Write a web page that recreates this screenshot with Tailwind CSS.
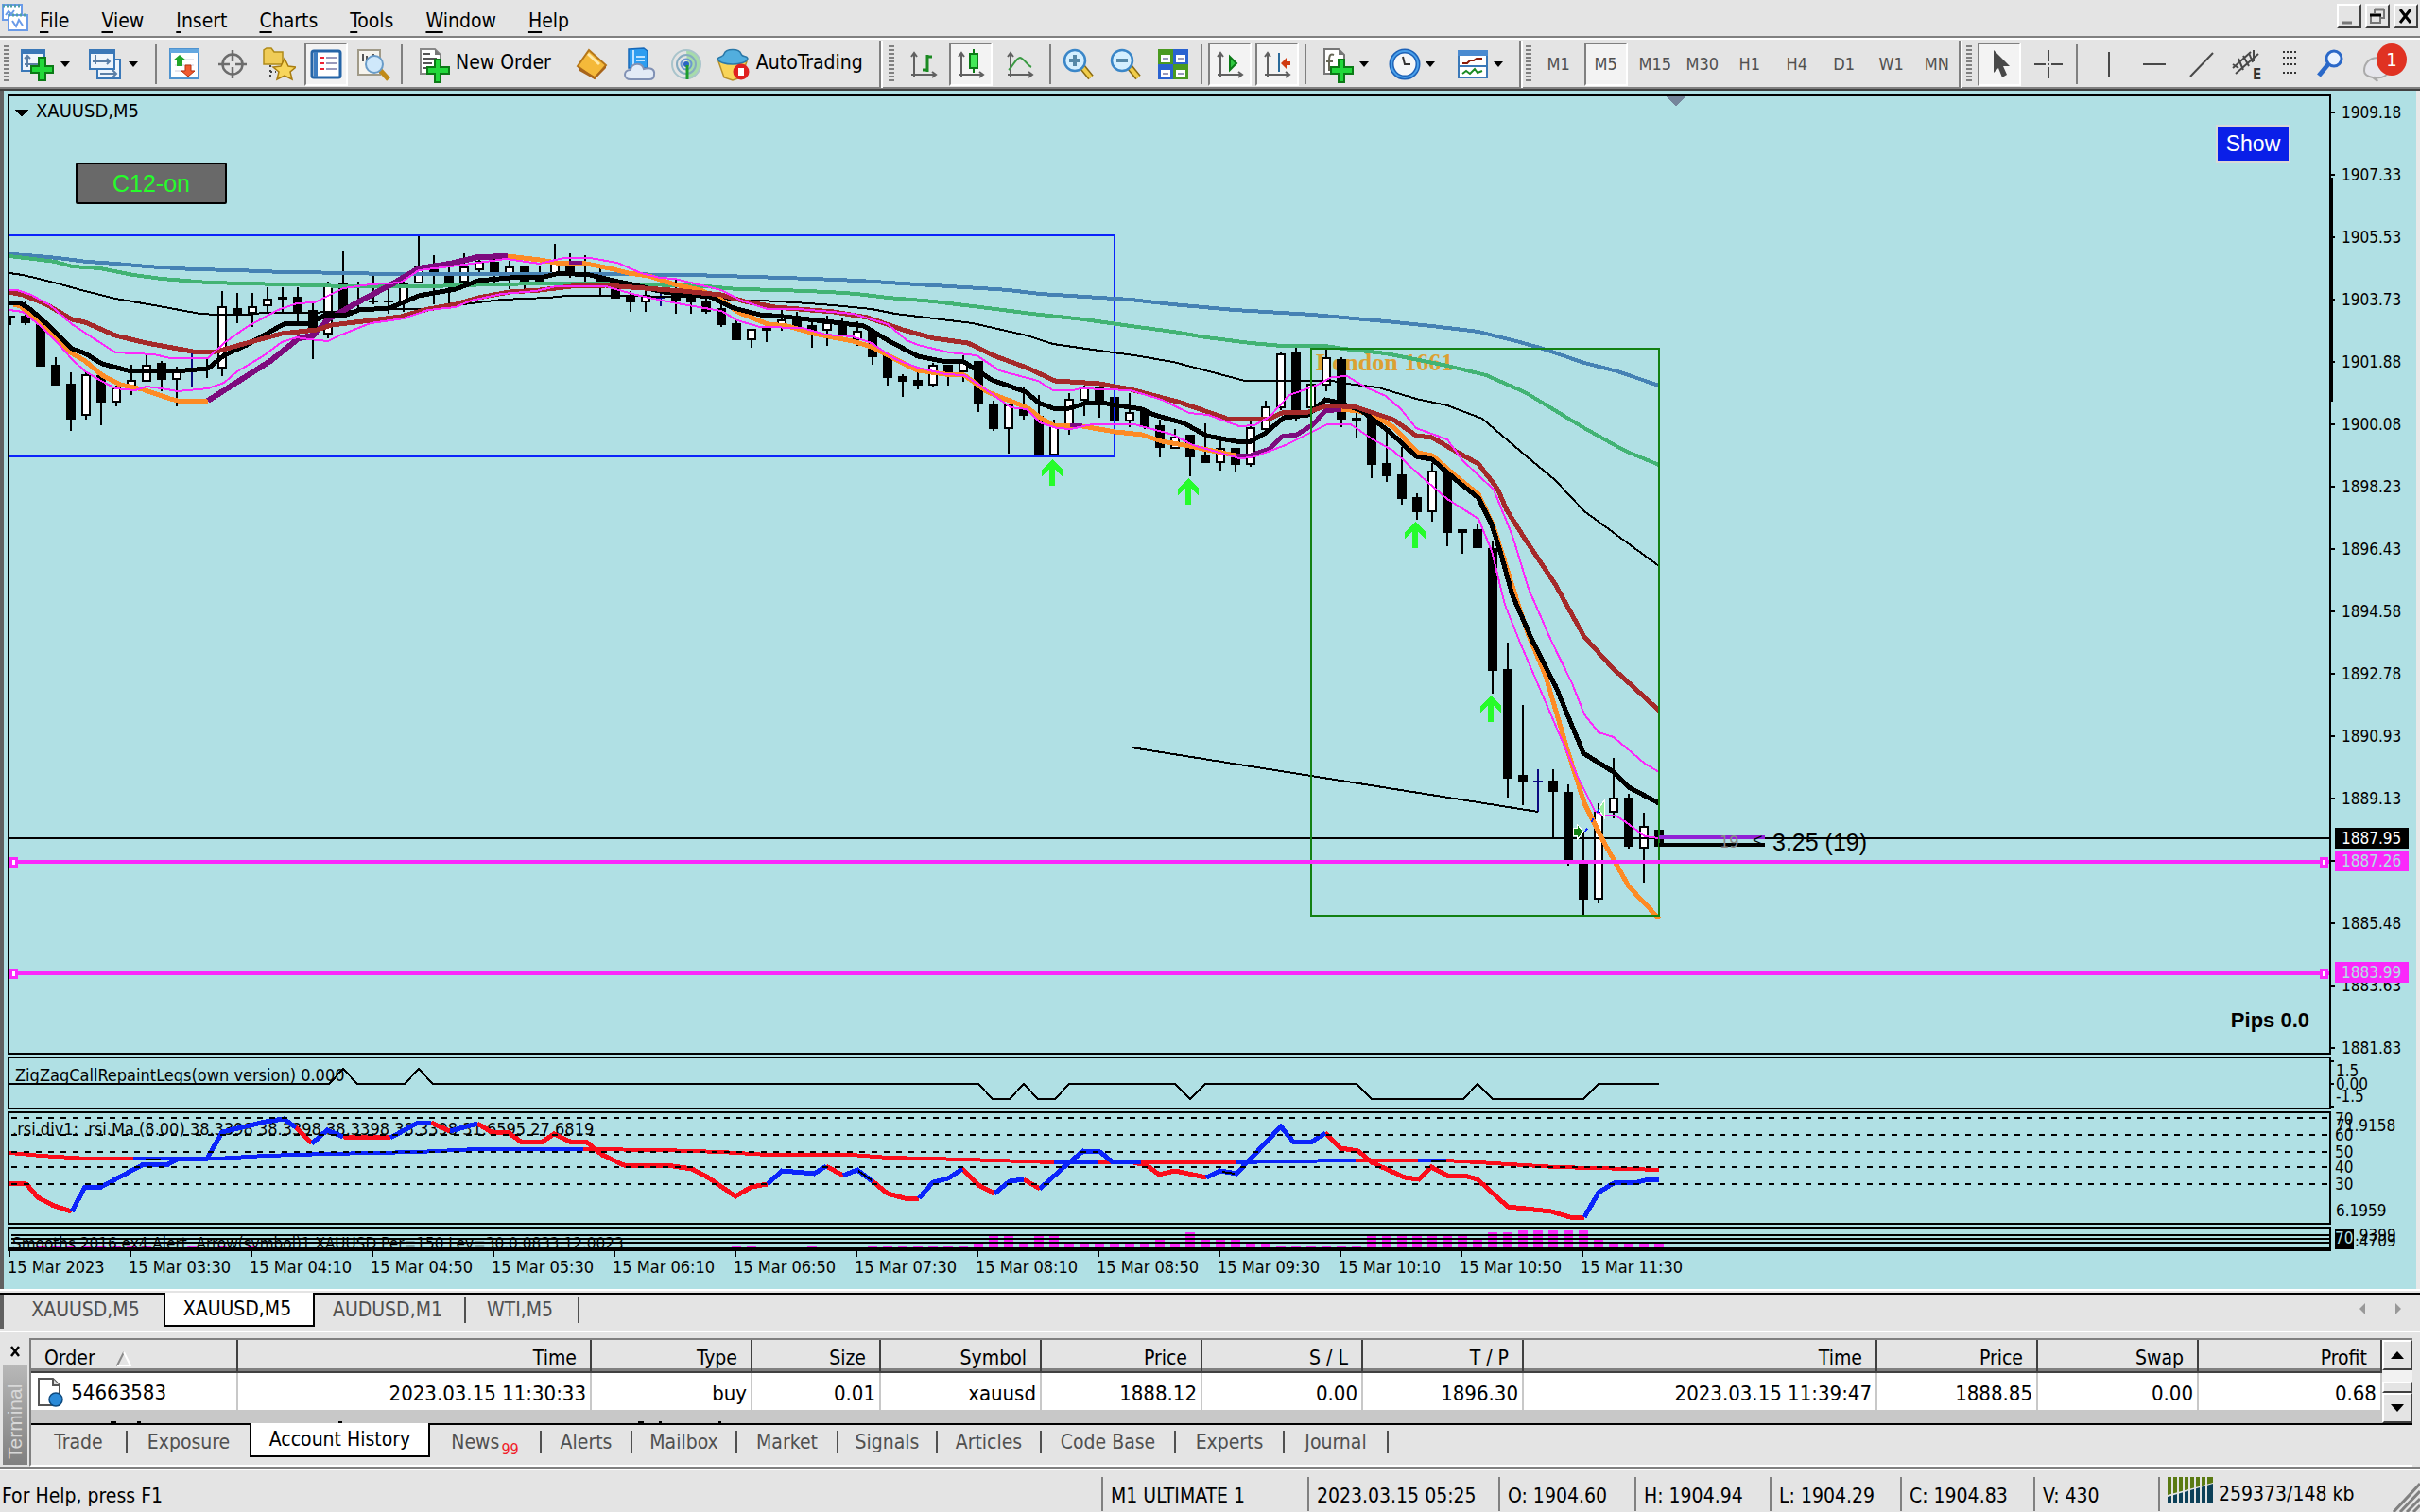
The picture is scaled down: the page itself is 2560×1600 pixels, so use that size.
<!DOCTYPE html>
<html lang="en">
<head>
  <meta charset="UTF-8" />
  <meta name="viewport" content="width=device-width, initial-scale=1.0"/>
  <title>XAUUSD,M5</title>
  <script src="https://cdn.jsdelivr.net/npm/@tailwindcss/browser@4"></script>
</head>
<body class="min-h-screen flex flex-col bg-[#e4e4e4] text-black font-['DejaVu_Sans_Condensed','DejaVu_Sans',sans-serif] text-[21px] leading-6 overflow-hidden whitespace-nowrap">

  <!-- menu -->
  <header class="h-[38px] flex items-start">
    <svg class="w-8 h-8 mt-1 shrink-0" viewBox="0 0 32 32" fill="#fff" stroke="#6a9be8" stroke-width="2">
      <rect x="3" y="1" width="20" height="16"/><path d="M3 2h20" stroke="#4fa0a8" stroke-width="3" stroke-dasharray="2 2"/><path d="M6 12l3-4 3 3 3-4" fill="none"/>
      <rect x="9" y="12" width="20" height="16"/><path d="M9 12h20" stroke="#4fa0a8" stroke-width="3" stroke-dasharray="2 2"/><path d="M13 18l4 6 3-7 4 6" fill="none"/>
    </svg>
    <nav class="flex gap-[34px] pl-2.5 pt-[10px]">
      <button><u class="underline-offset-4">F</u>ile</button>
      <button><u class="underline-offset-4">V</u>iew</button>
      <button><u class="underline-offset-4">I</u>nsert</button>
      <button><u class="underline-offset-4">C</u>harts</button>
      <button><u class="underline-offset-4">T</u>ools</button>
      <button><u class="underline-offset-4">W</u>indow</button>
      <button><u class="underline-offset-4">H</u>elp</button>
    </nav>
    <div class="ml-auto flex gap-1 pt-1 pr-0.5">
      <button aria-label="Minimize" class="w-[26px] h-[26px] bg-[#e4e4e4] border-2 border-t-white border-l-white border-r-[#404040] border-b-[#404040]"><svg class="w-full h-full" viewBox="0 0 22 22"><path d="M4 18h10" stroke="#777" stroke-width="3"/></svg></button>
      <button aria-label="Restore" class="w-[26px] h-[26px] bg-[#e4e4e4] border-2 border-t-white border-l-white border-r-[#404040] border-b-[#404040]"><svg class="w-full h-full" viewBox="0 0 22 22" fill="none" stroke="#777" stroke-width="2"><path d="M8 8V4h10v9h-4"/><path d="M8 4h10" stroke-width="3"/><rect x="4" y="10" width="10" height="8"/><path d="M3 10h12" stroke="#000" stroke-width="3"/></svg></button>
      <button aria-label="Close" class="w-[26px] h-[26px] bg-[#e4e4e4] border-2 border-t-white border-l-white border-r-[#404040] border-b-[#404040]"><svg class="w-full h-full" viewBox="0 0 22 22"><path d="M5 4l11 14M16 4L5 18" stroke="#000" stroke-width="3"/></svg></button>
    </div>
  </header>

  <!-- toolbar -->
  <div class="h-[58px] flex items-center bg-[#e4e4e4] border-t-2 border-t-[#808080] shadow-[inset_0_2px_0_#fff,inset_0_-2px_0_#404040,inset_0_-4px_0_#808080] *:shrink-0">
    <svg class="w-4 h-10" viewBox="0 0 16 40"><path d="M7 0v40" stroke="#808080" stroke-width="6" stroke-dasharray="2 2"/></svg>
    <button aria-label="New chart" class="w-[72px] h-[46px] flex items-center gap-1.5 pl-1.5">
      <svg class="w-9 h-9" viewBox="0 0 36 36"><rect x="1" y="3" width="24" height="22" fill="#eef5fc" stroke="#3a78b8" stroke-width="2"/><path d="M1 5h24" stroke="#3a78b8" stroke-width="4"/><path d="M7 9v12M4 12l3-3 3 3M4 18h14" stroke="#5b7fa6" stroke-width="2" fill="none"/><path d="M19 11h7v9h8v7h-8v8h-7v-8h-8v-7h8z" fill="#22d83a" stroke="#0b7a16" stroke-width="2"/></svg>
      <svg class="w-2.5 h-1.5" viewBox="0 0 10 6"><path d="M0 0h10L5 6z"/></svg>
    </button>
    <button aria-label="Profiles" class="w-[72px] h-[46px] flex items-center gap-1.5 pl-1.5">
      <svg class="w-9 h-9" viewBox="0 0 36 36"><rect x="9" y="13" width="24" height="20" fill="#eef5fc" stroke="#3a78b8" stroke-width="2"/><path d="M12 28h16M25 24l4 4-4 4" stroke="#5b7fa6" stroke-width="2" fill="none"/><rect x="1" y="3" width="26" height="20" fill="#eef5fc" stroke="#3a78b8" stroke-width="2"/><path d="M1 5h26" stroke="#3a78b8" stroke-width="4"/><path d="M7 8v10M4 15h18M19 12l3 3-3 3" stroke="#5b7fa6" stroke-width="2" fill="none"/></svg>
      <svg class="w-2.5 h-1.5" viewBox="0 0 10 6"><path d="M0 0h10L5 6z"/></svg>
    </button>
    <i class="w-0.5 h-[42px] bg-[#808080] mx-1"></i>
    <button aria-label="Market Watch" class="w-[46px] h-[46px] mx-0.5 grid place-items-center">
      <svg class="w-9 h-9" viewBox="0 0 36 36"><rect x="3" y="2" width="30" height="31" fill="#fff" stroke="#4f93cf" stroke-width="2"/><path d="M3 4h30" stroke="#64a8e0" stroke-width="4"/><path d="M8 13h20M8 19h20M8 25h20" stroke="#ccd" stroke-width="1"/><path d="M13 8l7 6-4 0v6h-6v-6H6z" fill="#22a52a"/><path d="M22 31l-7-6h4v-6h6v6h4z" fill="#f05a30" stroke="#b8320c"/></svg>
    </button>
    <button aria-label="Data Window" class="w-[46px] h-[46px] mx-0.5 grid place-items-center">
      <svg class="w-9 h-9" viewBox="0 0 36 36" fill="none" stroke="#6c6c6c" stroke-width="2.500"><circle cx="19" cy="18" r="10.500"/><path d="M19 3v12M19 21v12M4 18h12M22 18h12"/></svg>
    </button>
    <button aria-label="Navigator" class="w-[46px] h-[46px] mx-0.5 grid place-items-center">
      <svg class="w-9 h-9" viewBox="0 0 36 36"><path d="M2 10V3l3-2h5l3 4h9v13H2z" fill="#f0cc58" stroke="#b08a18" stroke-width="1.500"/><path d="M9 19v14M9 26h6" stroke="#444" stroke-width="2" stroke-dasharray="2 3"/><path d="M24 12l4 8 8 1-6 5 2 8-8-4-8 4 2-8-6-5 8-1z" fill="#f8d65c" stroke="#a87c10" stroke-width="1.500"/></svg>
    </button>
    <button aria-label="Terminal" class="w-[46px] h-[46px] mx-0.5 grid place-items-center bg-[#f3f3f3] border-2 border-t-[#808080] border-l-[#808080] border-r-white border-b-white">
      <svg class="w-9 h-9" viewBox="0 0 36 36"><rect x="3" y="4" width="30" height="28" rx="2" fill="#fff" stroke="#2565a8" stroke-width="3"/><path d="M5 5h4v26H5z" fill="#3c7cc0"/><path d="M12 11h4M12 17h4M12 23h4" stroke="#e23" stroke-width="2"/><path d="M18 11h12M18 17h12M18 23h12" stroke="#99b" stroke-width="2"/></svg>
    </button>
    <button aria-label="Strategy Tester" class="w-[46px] h-[46px] mx-0.5 grid place-items-center">
      <svg class="w-9 h-9" viewBox="0 0 36 36"><rect x="2" y="3" width="23" height="26" fill="#f6f4ee" stroke="#a09a88" stroke-width="2"/><path d="M7 7v8M11 9v6M18 7v9" stroke="#555" stroke-width="2"/><path d="M25 24l9 10" stroke="#c08a18" stroke-width="5"/><circle cx="19" cy="18" r="9" fill="#cfe8fb" stroke="#6a9cc8" stroke-width="2"/></svg>
    </button>
    <i class="w-0.5 h-[42px] bg-[#808080] mx-1"></i>
    <button class="h-[46px] flex items-center gap-1 pl-3 pr-[18px]">
      <svg class="w-9 h-10" viewBox="0 0 36 40"><path d="M3 4h15l6 6v20H3z" fill="#fff" stroke="#888" stroke-width="2"/><path d="M18 4v6h6z" fill="#777"/><path d="M6 9h7M6 14h14M6 19h9M6 24h8" stroke="#555" stroke-width="2"/><path d="M18 15h6v8h9v7h-9v9h-6v-9h-8v-7h8z" fill="#22d83a" stroke="#0b7a16" stroke-width="2"/></svg>
      <span class="-mt-1">New Order</span>
    </button>
    <button aria-label="Indicators" class="w-[46px] h-[46px] mx-0.5 grid place-items-center">
      <svg class="w-9 h-9" viewBox="0 0 36 36"><path d="M15 3l18 16-12 14L3 20z" fill="#f4b93a" stroke="#b5761a" stroke-width="2"/><path d="M3 20l2 5 16 9 12-12v-3L21 31z" fill="#a8641a"/><path d="M14 7l12 11" stroke="#ffe9a8" stroke-width="3"/></svg>
    </button>
    <button aria-label="MetaEditor" class="w-[46px] h-[46px] mx-0.5 grid place-items-center">
      <svg class="w-9 h-9" viewBox="0 0 36 36"><path d="M7 2l16-1 4 3v18H7z" fill="#2e9df0" stroke="#1768b8" stroke-width="1.500"/><path d="M12 3v17M15 10h9M15 14h9" stroke="#bfe3ff" stroke-width="2"/><path d="M9 34c-8 0-8-10 0-10 1-8 12-8 14-1 7-2 12 0 11 6 0 3-2 5-5 5z" fill="#e3ebf6" stroke="#8191b4" stroke-width="2"/></svg>
    </button>
    <button aria-label="Signals" class="w-[46px] h-[46px] mx-0.5 grid place-items-center">
      <svg class="w-9 h-9" viewBox="0 0 36 36" fill="none"><path d="M19 18l-1 16c10 0 15-8 15-16S26 3 18 3" fill="#a6dcaa"/><circle cx="18" cy="18" r="15" stroke="#a9c4cb" stroke-width="2"/><circle cx="18" cy="18" r="10" stroke="#86acc0" stroke-width="2"/><circle cx="18" cy="18" r="5.500" stroke="#6c98d0" stroke-width="2"/><circle cx="18" cy="18" r="3" fill="#2a65c4"/><path d="M19 19v15" stroke="#1d9c2c" stroke-width="3"/></svg>
    </button>
    <button class="h-[46px] flex items-center gap-[7px] pl-1.5 pr-[17px]">
      <svg class="w-9 h-9" viewBox="0 0 36 36"><path d="M3 15l6 17 9 3 9-3 6-17z" fill="#f8d458" stroke="#b8902a" stroke-width="1.500"/><path d="M2 12c3-3 6-1 7-5 2-6 16-6 18 0 1 4 6 1 7 5-2 8-30 8-32 0z" fill="#52aede" stroke="#2a78a8" stroke-width="1.500"/><circle cx="27" cy="26" r="8.500" fill="#e02020"/><rect x="24" y="22" width="6" height="8" fill="#fff"/></svg>
      <span class="-mt-1">AutoTrading</span>
    </button>
    <i class="w-1 h-[50px] bg-[#808080] border-r-2 border-white"></i>
    <svg class="w-[18px] h-10" viewBox="0 0 18 40"><path d="M9 0v40" stroke="#808080" stroke-width="6" stroke-dasharray="2 2"/></svg>
    <button aria-label="Bar Chart" class="w-[46px] h-[46px] mx-0.5 grid place-items-center">
      <svg class="w-9 h-9" viewBox="0 0 36 36" fill="none" stroke="#606060" stroke-width="2"><path d="M8 6v26M5 29h26M5 10l3-4 3 4M27 26l4 3-4 3"/><path d="M22 8v18M22 10h5M17 24h5" stroke="#1b8a22" stroke-width="3"/></svg>
    </button>
    <button aria-label="Candlesticks" class="w-[46px] h-[46px] mx-0.5 grid place-items-center bg-[#f3f3f3] border-2 border-t-[#808080] border-l-[#808080] border-r-white border-b-white">
      <svg class="w-9 h-9" viewBox="0 0 36 36" fill="none" stroke="#606060" stroke-width="2"><path d="M8 6v26M5 29h26M5 10l3-4 3 4M27 26l4 3-4 3"/><path d="M21 2v25" stroke="#0b7a16" stroke-width="2"/><rect x="17" y="7" width="8" height="15" fill="#44e858" stroke="#0b7a16"/></svg>
    </button>
    <button aria-label="Line Chart" class="w-[46px] h-[46px] mx-1 grid place-items-center">
      <svg class="w-9 h-9" viewBox="0 0 36 36" fill="none" stroke="#606060" stroke-width="2"><path d="M8 6v26M5 29h26M5 10l3-4 3 4M27 26l4 3-4 3"/><path d="M6 24c5-4 7-12 12-13 5 1 7 8 12 10" stroke="#3a9a42"/></svg>
    </button>
    <i class="w-0.5 h-[42px] bg-[#808080] mx-1"></i>
    <button aria-label="Zoom In" class="w-[46px] h-[46px] mx-0.5 grid place-items-center">
      <svg class="w-9 h-9" viewBox="0 0 36 36"><path d="M22 21l9 11" stroke="#8a6a10" stroke-width="7"/><path d="M22 21l9 11" stroke="#f0cc4a" stroke-width="4"/><circle cx="14" cy="14" r="11" fill="#d4efff" stroke="#3a86c8" stroke-width="2.500"/><path d="M14 8v12M8 14h12" stroke="#5588a8" stroke-width="4"/></svg>
    </button>
    <button aria-label="Zoom Out" class="w-[46px] h-[46px] mx-0.5 grid place-items-center">
      <svg class="w-9 h-9" viewBox="0 0 36 36"><path d="M22 21l9 11" stroke="#8a6a10" stroke-width="7"/><path d="M22 21l9 11" stroke="#f0cc4a" stroke-width="4"/><circle cx="14" cy="14" r="11" fill="#d4efff" stroke="#3a86c8" stroke-width="2.500"/><path d="M8 14h12" stroke="#5588a8" stroke-width="4"/></svg>
    </button>
    <button aria-label="Tile Windows" class="w-[46px] h-[46px] mx-0.5 grid place-items-center">
      <svg class="w-9 h-9" viewBox="0 0 36 36"><path d="M2 2h16v16H2zM18 18h16v16H18z" fill="#4a9a20"/><path d="M18 2h16v16H18zM2 18h16v16H2z" fill="#2a62d0"/><path d="M5 8h10v8H5zM21 8h10v8H21zM5 24h10v8H5zM21 24h10v8H21z" fill="#fff"/><path d="M7 12h6M23 12h6M7 28h6M23 28h6" stroke="#99b" stroke-width="2"/></svg>
    </button>
    <i class="w-0.5 h-[42px] bg-[#808080] mx-1"></i>
    <button aria-label="Auto Scroll" class="w-[46px] h-[46px] mx-0.5 grid place-items-center bg-[#f3f3f3] border-2 border-t-[#808080] border-l-[#808080] border-r-white border-b-white">
      <svg class="w-9 h-9" viewBox="0 0 36 36" fill="none" stroke="#606060" stroke-width="2"><path d="M8 6v26M5 29h26M5 10l3-4 3 4M27 26l4 3-4 3"/><path d="M18 10l7 7-7 7z" fill="#2fc840" stroke="#0b7a16"/></svg>
    </button>
    <button aria-label="Chart Shift" class="w-[46px] h-[46px] mx-0.5 grid place-items-center bg-[#f3f3f3] border-2 border-t-[#808080] border-l-[#808080] border-r-white border-b-white">
      <svg class="w-9 h-9" viewBox="0 0 36 36" fill="none" stroke="#606060" stroke-width="2"><path d="M8 6v26M5 29h26M5 10l3-4 3 4M27 26l4 3-4 3"/><path d="M20 6v20" stroke="#2a6a9a"/><path d="M22 17l6-6v4h4v4h-4v4z" fill="#d03a10" stroke="none"/></svg>
    </button>
    <i class="w-0.5 h-[42px] bg-[#808080] ml-1 mr-[10px]"></i>
    <button aria-label="Indicators list" class="w-[70px] h-[46px] flex items-center gap-1 pl-1.5">
      <svg class="w-9 h-10" viewBox="0 0 36 40"><path d="M3 4h15l6 6v20H3z" fill="#fff" stroke="#777" stroke-width="2"/><path d="M18 4v6h6z" fill="#777"/><path d="M13 10c-5-2-5 3-5 7v10M5 17h7" fill="none" stroke="#665" stroke-width="2"/><path d="M18 15h6v8h9v7h-9v9h-6v-9h-8v-7h8z" fill="#22d83a" stroke="#0b7a16" stroke-width="2"/></svg>
      <svg class="w-2.5 h-1.5" viewBox="0 0 10 6"><path d="M0 0h10L5 6z"/></svg>
    </button>
    <button aria-label="Periods" class="w-[72px] h-[46px] flex items-center gap-1 pl-1.5">
      <svg class="w-9 h-9" viewBox="0 0 36 36"><circle cx="18" cy="18" r="14" fill="#f4f6f8" stroke="#1d62b8" stroke-width="5"/><circle cx="18" cy="18" r="14" fill="none" stroke="#4aa0ea" stroke-width="2"/><path d="M16 10l2 8h6" fill="none" stroke="#333" stroke-width="2"/></svg>
      <svg class="w-2.5 h-1.5" viewBox="0 0 10 6"><path d="M0 0h10L5 6z"/></svg>
    </button>
    <button aria-label="Templates" class="w-[73px] h-[46px] flex items-center gap-1 pl-1.5">
      <svg class="w-9 h-9" viewBox="0 0 36 36"><rect x="3" y="4" width="30" height="28" fill="#fff" stroke="#3a78b8" stroke-width="2"/><path d="M2 6h32" stroke="#4a8ad0" stroke-width="6"/><path d="M3 20h30" stroke="#3a78b8" stroke-width="2"/><path d="M7 17h5l3-3h4l3-2h6" fill="none" stroke="#8a1a08" stroke-width="2"/><path d="M7 28l4-3 4 3 5-5 3 4 5-2" fill="none" stroke="#1b8a22" stroke-width="2"/></svg>
      <svg class="w-2.5 h-1.5" viewBox="0 0 10 6"><path d="M0 0h10L5 6z"/></svg>
    </button>
    <i class="w-1 h-[50px] bg-[#808080] border-r-2 border-white"></i>
    <svg class="w-[13px] h-10" viewBox="0 0 13 40"><path d="M6 0v40" stroke="#808080" stroke-width="6" stroke-dasharray="2 2"/></svg>
    <div class="flex text-[18px] text-[#505050]">
      <button class="w-[46px] h-[46px] mx-0.5">M1</button>
      <button class="w-[46px] h-[46px] mx-0.5 bg-[#f3f3f3] border-2 border-t-[#808080] border-l-[#808080] border-r-white border-b-white">M5</button>
      <button class="w-[46px] h-[46px] mx-1">M15</button>
      <button class="w-[46px] h-[46px] mr-0.5">M30</button>
      <button class="w-[46px] h-[46px] mx-0.5">H1</button>
      <button class="w-[46px] h-[46px] mx-0.5">H4</button>
      <button class="w-[46px] h-[46px] mx-0.5">D1</button>
      <button class="w-[46px] h-[46px] mx-0.5">W1</button>
      <button class="w-[46px] h-[46px]">MN</button>
    </div>
    <i class="w-1 h-[50px] bg-[#808080] border-r-2 border-white"></i>
    <svg class="w-[14px] h-10" viewBox="0 0 14 40"><path d="M7 0v40" stroke="#808080" stroke-width="6" stroke-dasharray="2 2"/></svg>
    <button aria-label="Cursor" class="w-[46px] h-[46px] mx-0.5 grid place-items-center bg-[#f3f3f3] border-2 border-t-[#808080] border-l-[#808080] border-r-white border-b-white">
      <svg class="w-9 h-9" viewBox="0 0 36 36"><path d="M12 3v24l5-5 4 10 5-3-4-9h7z" fill="#484848"/></svg>
    </button>
    <button aria-label="Crosshair" class="w-[46px] h-[46px] ml-1 mr-0.5 grid place-items-center">
      <svg class="w-9 h-9" viewBox="0 0 36 36" stroke="#484848" stroke-width="2"><path d="M18 3v12M18 21v12M3 18h12M21 18h12M17 18h2"/></svg>
    </button>
    <i class="w-0.5 h-[42px] bg-[#808080] mx-1"></i>
    <button aria-label="Vertical Line" class="w-[46px] h-[46px] ml-1.5 grid place-items-center">
      <svg class="w-9 h-9" viewBox="0 0 36 36" stroke="#484848" stroke-width="2"><path d="M18 5v26"/></svg>
    </button>
    <button aria-label="Horizontal Line" class="w-[46px] h-[46px] mx-0.5 grid place-items-center">
      <svg class="w-9 h-9" viewBox="0 0 36 36" stroke="#484848" stroke-width="2"><path d="M6 18h24"/></svg>
    </button>
    <button aria-label="Trendline" class="w-[46px] h-[46px] mx-0.5 grid place-items-center">
      <svg class="w-9 h-9" viewBox="0 0 36 36" stroke="#484848" stroke-width="2"><path d="M6 31L30 6"/></svg>
    </button>
    <button aria-label="Equidistant Channel" class="w-[46px] h-[46px] grid place-items-center">
      <svg class="w-9 h-9" viewBox="0 0 36 36" stroke="#484848" stroke-width="2" fill="none"><path d="M3 22L22 5M6 28L30 7M3 18l6 4M9 12l5 12M14 9l6 11M20 6l4 10M25 3v12"/><text x="24" y="34" font-size="15" font-weight="bold" fill="#333" stroke="none">E</text></svg>
    </button>
    <button aria-label="Fibonacci" class="w-[42px] h-[46px] grid place-items-center">
      <svg class="w-9 h-9" viewBox="0 0 36 36" stroke="#333" stroke-width="2"><path d="M12 5h15M12 11h15M12 18h15M12 27h15" stroke-dasharray="2 2"/></svg>
    </button>
    <button aria-label="Search" class="w-[48px] h-[46px] grid place-items-center">
      <svg class="w-9 h-9" viewBox="0 0 36 36"><path d="M15 18L5 30" stroke="#2a68c8" stroke-width="5"/><circle cx="21" cy="12" r="8" fill="#eaf3ff" stroke="#2a68c8" stroke-width="3"/></svg>
    </button>
    <button aria-label="Notifications" class="ml-auto mr-3.5 w-[50px] h-[46px]">
      <svg class="w-full h-full" viewBox="0 0 50 46"><path d="M5 30c0-18 26-18 26-2 0 7-7 10-14 9l2 4-5-4c-5-1-9-3-9-7z" fill="#e6e6ec" stroke="#aaa" stroke-width="2"/><ellipse cx="34" cy="18" rx="16" ry="17" fill="#e03222"/><text x="34" y="25" font-size="20" text-anchor="middle" fill="#fff">1</text></svg>
    </button>
  </div>

  <!-- chart window -->
  <main class="grow flex flex-col gap-0.5 bg-[#b0e0e4] pt-1 pl-1 border-l-4 border-l-[#606060] border-r-4 border-r-[#e8e8e8]">
    <section class="relative grow flex">
      <svg id="price" class="grow border-2 border-black" shape-rendering="crispEdges">
        <g transform="translate(-10,-102)" fill="none">
          <path d="M1763 102h20l-10 11z" fill="#75859b"/>
          <path d="M16 116h14l-7 8z" fill="#000"/>
          <text x="38" y="124" font-size="20" fill="#000">XAUUSD,M5</text>
          <text x="1392" y="392" font-family="Liberation Serif" font-weight="bold" font-size="26" fill="#dca032">London 1661</text>
          <g id="candles"></g>
          <path d="M0 249H1179V483H0" stroke="#0b24fb" stroke-width="2"/>
          <path d="M1197 791L1627 859" stroke="#000" stroke-width="2"/>
          <path d="M0 887H4000" stroke="#000" stroke-width="2"/>
          <polyline stroke="#4682b4" stroke-width="4" points="10,269 29,270 61,273 92,277 123,279 155,282 204,285 250,286 300,288 380,289 400,290 640,290 731,291 796,293 859,295 908,297 971,301 1037,305 1067,307 1100,311 1163,315 1196,317 1240,322 1306,328 1388,333 1466,340 1515,345 1564,351 1604,361 1629,368 1676,384 1711,393 1755,408"/>
          <polyline stroke="#42b374" stroke-width="4" points="10,271 35,274 59,277 76,282 106,284 141,291 171,295 220,299 300,301 367,303 457,303 482,302 571,300 640,300 684,301 747,303 780,306 827,307 876,309 906,311 939,315 988,319 1037,325 1100,333 1147,338 1196,345 1241,351 1276,357 1323,363 1356,366 1402,366 1421,369 1466,374 1531,387 1572,397 1613,415 1676,453 1719,477 1755,492"/>
          <polyline stroke="#000" stroke-width="2" points="10,289 24,291 41,295 61,300 86,307 122,316 163,323 212,332 229,333 261,333 278,331 327,331 416,327 449,327 490,322 531,317 580,315 600,313 759,314 771,317 804,318 841,320 882,323 922,327 947,332 1029,342 1086,355 1114,364 1163,371 1200,376 1241,383 1317,403 1409,403 1425,406 1458,410 1498,422 1531,429 1568,443 1615,483 1645,508 1676,541 1755,599"/>
          <polyline stroke="#fd8b25" stroke-width="5" points="14,322 22,324 43,343 73,372 90,382 108,397 127,407 151,412 180,422 188,424 220,424"/>
          <polyline stroke="#7d0b7d" stroke-width="6" points="220,424 245,408 286,382 316,358 331,355 347,338 380,319 416,300 443,284 476,279 506,272 537,271"/>
          <polyline stroke="#fd8b25" stroke-width="5" points="537,271 571,275 588,278 620,279 645,284 665,289 686,292 714,301 741,307 763,317 780,330 812,343 833,345 861,353 902,361 922,367 947,380 971,392 1000,396 1020,397 1045,415 1086,431 1102,443 1114,450 1133,450 1145,451 1180,457 1208,460 1229,467 1258,472 1307,482"/>
          <path d="M602 278h14M1132 450h13" stroke="#7d0b7d" stroke-width="4"/>
          <polyline stroke="#fd8b25" stroke-width="5" points="1419,433 1437,435 1458,442 1474,452 1500,479 1515,482 1539,503 1564,523 1580,557 1604,633 1616,670 1635,715 1657,790 1676,850 1696,890 1723,938 1755,972"/>
          <polyline stroke="#000" stroke-width="5" points="10,320 22,321 33,328 53,346 76,369 90,374 108,385 135,392 196,392 220,390 237,376 261,365 300,343 327,342 343,334 367,333 380,328 412,326 443,313 482,306 506,297 539,294 576,293 592,289 624,291 649,297 673,302 702,309 751,314 776,326 804,333 829,335 882,341 914,345 939,360 971,377 996,382 1020,383 1049,402 1086,415 1098,426 1114,432 1131,432 1151,426 1171,427 1208,433 1221,439 1253,448 1276,461 1307,467 1323,467 1339,458 1358,442 1384,439 1402,423 1417,426 1441,435 1470,457 1498,483 1515,486 1539,507 1564,527 1578,555 1588,587 1600,630 1621,678 1646,727 1675,797 1707,817 1723,833 1755,850"/>
          <polyline stroke="#7d0b7d" stroke-width="5" points="1307,482 1323,482 1343,475 1356,462 1372,460 1388,450 1402,435 1419,433"/>
          <polyline stroke="#a52a2a" stroke-width="5" points="10,309 24,312 49,322 76,338 90,341 122,355 155,363 188,369 204,372 229,372 261,363 298,353 335,349 351,344 392,339 424,335 453,327 482,322 506,315 539,309 571,307 604,303 641,302 682,305 722,308 763,312 788,319 820,325 882,330 918,336 955,349 988,358 1024,363 1053,377 1086,389 1116,403 1163,406 1196,412 1249,426 1298,443 1343,443 1356,437 1384,436 1404,429 1435,431 1474,444 1498,461 1515,463 1539,477 1564,491 1584,517 1594,540 1613,570 1645,618 1676,674 1707,708 1740,738 1755,752"/>
          <polyline stroke="#fb28fb" stroke-width="2" points="10,307 18,307 33,312 53,323 76,343 102,360 122,373 163,375 180,379 220,379 237,363 261,346 294,328 314,321 333,320 363,305 392,301 424,299 443,286 476,282 506,278 535,274 571,279 596,273 624,273 653,278 678,289 698,294 714,295 763,307 784,318 812,327 845,327 902,332 939,343 959,360 971,365 1004,373 1033,376 1057,392 1098,403 1114,413 1135,413 1143,411 1196,413 1229,423 1258,437 1278,439 1311,451 1327,450 1343,441 1364,418 1392,408 1409,399 1425,398 1445,410 1466,419 1482,433 1498,453 1531,465 1547,487 1580,518 1600,567 1617,623 1641,678 1663,723 1676,756 1691,775 1707,780 1740,808 1755,817"/>
          <polyline stroke="#fb28fb" stroke-width="2" points="10,328 24,330 43,345 61,363 76,380 90,393 107,403 122,411 143,413 155,409 171,411 188,414 220,411 237,405 251,393 278,377 298,362 314,357 327,359 347,361 359,355 392,342 427,337 453,328 482,325 498,318 531,311 567,308 588,303 641,303 669,311 686,315 722,322 763,329 780,339 804,346 849,347 873,354 902,356 922,363 947,380 971,389 1000,396 1020,397 1037,408 1069,431 1086,433 1100,447 1118,453 1133,454 1155,449 1200,449 1241,460 1262,471 1311,485 1325,484 1360,471 1404,449 1429,449 1449,463 1474,477 1502,503 1531,528 1564,549 1578,583 1592,640 1608,680 1635,743 1668,820 1687,858 1696,863 1709,863 1720,870 1740,885 1755,887"/>
          <!-- trade markers -->
          <path d="M1664 876h4v-4l7 8-7 9v-5h-4z" fill="#128012" stroke="#fff" stroke-width="1"/>
          <path d="M1697 847v18l-6-9z" fill="#98f0a0" stroke="#fff" stroke-width="1"/>
          <path d="M1677 880l16-26" stroke="#0b24fb" stroke-width="2" stroke-dasharray="4 8"/>
          <rect x="1387" y="369" width="368" height="600" stroke="#128012" stroke-width="2"/>
          <path d="M1755 886h112" stroke="#9120d5" stroke-width="4"/>
          <path d="M1755 894h112" stroke="#000" stroke-width="4"/>
          <text x="1819" y="897" font-size="18" fill="#888">19</text>
          <g font-family="Liberation Sans" fill="#000">
            <text x="1854" y="895" font-size="18">&lt;</text>
            <text x="1875" y="900" font-size="25">3.25 (19)</text>
          </g>
          <g fill="#26fc2b">
            <path d="M1113 486l11 11v7l-8-7v17h-6v-17l-8 7v-7z"/>
            <path d="M1257 506l11 11v7l-8-7v17h-6v-17l-8 7v-7z"/>
            <path d="M1497 552l11 11v7l-8-7v17h-6v-17l-8 7v-7z"/>
            <path d="M1577 736l11 11v7l-8-7v17h-6v-17l-8 7v-7z"/>
          </g>
          <g stroke="#fb28fb">
            <path d="M0 912H4000M0 1030H4000" stroke-width="4"/>
            <path d="M11 908h6v8h-6zM11 1026h6v8h-6z" fill="#fff" stroke-width="3"/>
          </g>
        </g>
        <svg x="100%" overflow="visible"><path d="M-9 806h6v8h-6zM-9 924h6v8h-6z" fill="#fff" stroke="#fb28fb" stroke-width="3"/></svg>
      </svg>
      <svg id="scale" class="w-[90px] shrink-0" font-size="17"></svg>
      <button class="absolute left-[72px] top-[72px] w-[160px] h-[44px] bg-[#696969] border-2 border-black rounded-xs text-[#26fc2b] text-[25px] font-['Liberation_Sans',sans-serif]">C12-on</button>
      <button class="absolute right-[133px] top-8 w-[79px] h-10 bg-[#0a1fe8] border-2 border-[#d8d8d8] text-white text-[23px] font-['Liberation_Sans',sans-serif]">Show</button>
      <div class="absolute right-[113px] bottom-[24px] text-[22px] font-bold font-['Liberation_Sans',sans-serif]">Pips 0.0</div>
    </section>

    <section class="h-[56px] flex">
      <svg class="grow border-2 border-black" shape-rendering="crispEdges">
        <g transform="translate(-10,-1120)">
          <text x="16" y="1144" font-size="18">ZigZagCallRepaintLegs(own version) 0.000</text>
          <polyline fill="none" stroke="#000" stroke-width="2" points="10,1147 348,1147 363,1131 378,1147 428,1147 443,1131 458,1147 1035,1147 1050,1163 1068,1163 1083,1147 1098,1163 1116,1163 1131,1147 1243,1147 1259,1163 1275,1147 1435,1147 1451,1163 1548,1163 1563,1147 1579,1163 1675,1163 1691,1147 1755,1147"/>
        </g>
      </svg>
      <svg class="w-[90px] shrink-0" font-size="17"><text x="5" y="21">1.5</text><text x="5" y="35">0.00</text><text x="5" y="48">-1.5</text><path d="M0 5h3M0 29h3M0 53h3" stroke="#000" stroke-width="2"/></svg>
    </section>

    <section class="h-[120px] flex">
      <svg class="grow border-2 border-black" shape-rendering="crispEdges">
        <g transform="translate(-10,-1178)" fill="none">
          <text x="13" y="1201" font-size="18" fill="#000">.rsi.div1: .rsi.Ma (8.00) 38.3398 38.3398 38.3398 38.3398 31.6595 27.6819</text>
          <g stroke="#fb0d1b" stroke-width="5">
            <path stroke-width="4" d="M10 1220L43 1223 92 1226 141 1226M617 1216L700 1217 763 1219 812 1222 900 1222 940 1225 1021 1227 1084 1229 1115 1230M1161 1230H1175M1207 1230H1308M1434 1228H1500M1530 1228L1580 1231 1646 1235 1724 1237 1755 1238"/>
            <path d="M10 1252L28 1253 40 1267 57 1276 76 1282M313 1193L330 1210M363 1203L413 1204M456 1188L476 1197M505 1189L520 1198 537 1198 551 1208 574 1208 586 1200 603 1208 620 1208 637 1222 660 1233 712 1234 732 1237 749 1246 778 1266 795 1256 812 1253M874 1234L892 1244M923 1250L939 1263 957 1268 972 1268M1018 1237L1035 1254 1052 1263M1083 1248L1100 1258M1194 1229L1213 1233 1226 1243 1243 1239 1276 1246M1402 1199L1418 1215 1437 1218 1451 1230 1486 1246 1501 1248 1514 1235 1531 1244 1549 1244 1563 1248 1595 1277 1641 1282 1661 1288 1676 1288"/>
          </g>
          <g stroke="#0b24fb" stroke-width="5">
            <path stroke-width="4" d="M141 1226L230 1226 281 1223 347 1221 442 1219 505 1216 617 1216M1115 1230H1161M1175 1230H1207M1308 1230L1354 1229 1434 1228M1500 1228H1530"/>
            <path d="M76 1282L90 1256 107 1256 152 1232 178 1232 189 1226 219 1226 235 1198 281 1187 300 1184 313 1193M330 1210L346 1196 363 1203M413 1204L442 1188 456 1188M476 1197L505 1189M812 1253L827 1239 861 1242 874 1234M892 1244L907 1238 923 1250M972 1268L987 1251 1003 1247 1018 1237M1052 1263L1068 1250 1083 1248M1100 1258L1130 1231 1146 1218 1164 1219 1176 1229 1194 1229M1276 1246L1291 1239 1308 1242 1355 1192 1368 1208 1388 1208 1402 1199M1676 1288L1691 1262 1707 1252 1732 1251 1744 1248 1755 1248"/>
          </g>
          <path d="M154 1227h16M1514 1229h16M908 1239l14 10M1293 1240l13 2" stroke="#000" stroke-width="2"/>
          <path d="M12 1183H4000M12 1201H4000M12 1219H4000M12 1235H4000M12 1253H4000" stroke="#000" stroke-width="2" stroke-dasharray="6 7"/>
        </g>
      </svg>
      <svg class="w-[90px] shrink-0" font-size="17"><text x="4" y="14">70</text><text x="5" y="21">71.9158</text><text x="4" y="31">60</text><text x="4" y="49">50</text><text x="4" y="65">40</text><text x="4" y="83">30</text><text x="5" y="111">6.1959</text></svg>
    </section>

    <section class="h-[26px] flex">
      <svg class="grow border-2 border-b-4 border-black" shape-rendering="crispEdges">
        <g transform="translate(-10,-1300)">
          <g id="bars" fill="#fb28fb"></g>
          <text x="13" y="1322" font-size="17">Smooths 2016.ex4 Alert, Arrow(symbol)1 XAUUSD Per=150 Lev=30.0.0833,12.0023</text>
          <path d="M12 1307H4000M12 1311H4000M12 1315H4000" stroke="#000" stroke-width="2"/>
        </g>
      </svg>
      <svg class="w-[90px] shrink-0" font-size="17"><rect x="4" y="2" width="20" height="22"/><text x="25" y="15">.9399</text><text x="25" y="21">.4709</text><text x="4" y="18" fill="#b0e0e4">70</text></svg>
    </section>

    <svg class="h-[38px] w-full -mt-0.5 mb-0.5"><g id="dates" font-size="18"></g></svg>
  </main>

  <!-- chart tabs -->
  <div class="h-[46px] pt-0.5 border-b-2 border-white flex border-t-2 border-t-white">
    <div class="w-full border-t-2 border-black flex items-start text-[#505050]">
      <button class="w-[173px] h-9 pl-1 pb-1 border-l-4 border-l-[#606060]">XAUUSD,M5</button>
      <button class="w-[160px] h-9 pr-1 bg-white text-black border-2 border-t-0 border-black -mt-0.5">XAUUSD,M5</button>
      <button class="w-[160px] h-7 mt-0.5 pr-1 border-r-2 border-[#505050]">AUDUSD,M1</button>
      <button class="w-[120px] h-7 mt-0.5 pr-1 border-r-2 border-[#505050]">WTI,M5</button>
      <div class="ml-auto mt-[9px] mr-[18px] flex gap-[28px]">
        <button aria-label="Scroll left"><svg class="w-2.5 h-3" viewBox="0 0 10 12"><path d="M8 0v12L2 6z" fill="#999"/></svg></button>
        <button aria-label="Scroll right"><svg class="w-2.5 h-3" viewBox="0 0 10 12"><path d="M2 0v12l6-6z" fill="#999"/></svg></button>
      </div>
    </div>
  </div>

  <!-- terminal -->
  <section class="h-[142px] pt-1.5 flex">
    <div class="w-[31px] shrink-0 flex flex-col items-center text-[18px]">
      <button aria-label="Close terminal" class="h-7 flex items-center"><svg class="w-3 h-3" viewBox="0 0 12 12"><path d="M2 1l8 10M10 1L2 11" stroke="#000" stroke-width="2.500"/></svg></button>
      <div class="grow w-[26px] mb-0.5 bg-linear-to-t from-[#b8b8b8] to-[#808080] text-[#d8d8d8] text-[21px] leading-[26px] font-['Liberation_Sans',sans-serif] [writing-mode:vertical-rl] rotate-180 text-left pt-1.5">Terminal</div>
    </div>
    <div class="grow min-w-0 border-l-2 border-t-2 border-t-[#808080] border-l-[#808080] border-b-2 border-b-white mr-2 flex flex-col">
      <div class="h-[88px] flex bg-[#c8c8c8]">
        <div class="grow min-w-0 relative">
          <table class="w-full table-fixed border-collapse text-right">
            <colgroup><col class="w-[218px]"><col class="w-[374px]"><col class="w-[170px]"><col class="w-[136px]"><col class="w-[170px]"><col class="w-[170px]"><col class="w-[170px]"><col class="w-[170px]"><col class="w-[374px]"><col class="w-[170px]"><col class="w-[170px]"><col></colgroup>
            <thead>
              <tr class="h-[34px] bg-[#e4e4e4] border-b-2 border-[#404040] shadow-[inset_0_-4px_0_#808080] *:font-normal *:pt-1 *:pr-3.5 *:border-r-2 *:border-r-[#404040]">
                <th class="text-left pl-3.5">Order <svg class="inline w-4 h-4 ml-4" viewBox="0 0 16 16"><path d="M1 15L8 1" stroke="#888" stroke-width="2"/><path d="M8 1l7 14H1" fill="none" stroke="#fff" stroke-width="2"/></svg></th>
                <th>Time</th><th>Type</th><th>Size</th><th>Symbol</th><th>Price</th><th>S / L</th><th>T / P</th><th>Time</th><th>Price</th><th>Swap</th><th>Profit</th>
              </tr>
            </thead>
            <tbody>
              <tr class="h-10 bg-white text-[22px] border-t-2 border-[#c8c8c8] *:pt-1 *:pr-1 *:border-r-2 *:border-[#c8c8c8]">
                <td class="text-left pl-1"><svg class="inline w-8 h-8 -mt-1" viewBox="0 0 32 32"><path d="M4 2h15l7 7v21H4z" fill="#fff" stroke="#555" stroke-width="2"/><path d="M19 2v7h7" fill="#ddd" stroke="#555" stroke-width="2"/><circle cx="22" cy="24" r="7" fill="#2a8ad8" stroke="#0c4a80" stroke-width="1.500"/></svg> 54663583</td>
                <td>2023.03.15 11:30:33</td><td>buy</td><td>0.01</td><td>xauusd</td><td>1888.12</td><td>0.00</td><td>1896.30</td><td>2023.03.15 11:39:47</td><td>1888.85</td><td>0.00</td><td>0.68</td>
              </tr>
            </tbody>
          </table>
          <svg class="absolute bottom-0 left-0 w-full h-0.5"><path d="M84 1h6M112 1h4M325 1h4M642 1h6M664 1h3M727 1h3" stroke="#000" stroke-width="2"/></svg>
        </div>
        <div class="w-8 shrink-0 flex flex-col bg-[#f2f2f2]">
          <button aria-label="Scroll up" class="h-8 bg-[#e4e4e4] border-2 border-t-white border-l-white border-r-[#404040] border-b-[#404040] grid place-items-center"><svg class="w-3.5 h-2" viewBox="0 0 14 8"><path d="M0 8h14L7 0z"/></svg></button>
          <div class="h-3"></div>
          <div class="h-3 bg-[#e4e4e4] border-2 border-t-white border-l-white border-r-[#404040] border-b-[#404040]"></div>
          <button aria-label="Scroll down" class="grow bg-[#e4e4e4] border-2 border-t-white border-l-white border-r-[#404040] border-b-[#404040] grid place-items-center"><svg class="w-3.5 h-2" viewBox="0 0 14 8"><path d="M0 0h14L7 8z"/></svg></button>
        </div>
      </div>
      <div class="grow border-t-2 border-black flex items-start text-[#505050]">
        <button class="w-[102px] h-6 mt-1.5 border-r-2 border-[#505050]">Trade</button>
        <button class="w-[129px] h-6 mt-1.5">Exposure</button>
        <button class="w-[191px] h-9 -mt-0.5 bg-white text-black border-2 border-t-0 border-black">Account History</button>
        <button class="w-[118px] h-6 mt-1.5 border-r-2 border-[#505050]">News <sub class="text-[16px] text-[#f01c28] bottom-[-6px] -ml-1">99</sub></button>
        <button class="w-[96px] h-6 mt-1.5 border-r-2 border-[#505050]">Alerts</button>
        <button class="w-[111px] h-6 mt-1.5 border-r-2 border-[#505050]">Mailbox</button>
        <button class="w-[107px] h-6 mt-1.5 border-r-2 border-[#505050]">Market</button>
        <button class="w-[105px] h-6 mt-1.5 border-r-2 border-[#505050]">Signals</button>
        <button class="w-[110px] h-6 mt-1.5 border-r-2 border-[#505050]">Articles</button>
        <button class="w-[142px] h-6 mt-1.5 border-r-2 border-[#505050]">Code Base</button>
        <button class="w-[115px] h-6 mt-1.5 border-r-2 border-[#505050]">Experts</button>
        <button class="w-[110px] h-6 mt-1.5 border-r-2 border-[#505050]">Journal</button>
      </div>
    </div>
  </section>

  <!-- status bar -->
  <footer class="h-12 border-t-2 border-[#808080] shadow-[inset_0_2px_0_#fff] flex items-center pt-2 *:shrink-0">
    <span class="grow pl-0.5 pt-1">For Help, press F1</span>
    <span class="w-[218px] h-9 leading-10 pl-2 border-l-2 border-[#808080]">M1 ULTIMATE 1</span>
    <span class="w-[202px] h-9 leading-10 pl-2 border-l-2 border-[#808080]">2023.03.15 05:25</span>
    <span class="w-[144px] h-9 leading-10 pl-2 border-l-2 border-[#808080]">O: 1904.60</span>
    <span class="w-[143px] h-9 leading-10 pl-2 border-l-2 border-[#808080]">H: 1904.94</span>
    <span class="w-[138px] h-9 leading-10 pl-2 border-l-2 border-[#808080]">L: 1904.29</span>
    <span class="w-[141px] h-9 leading-10 pl-2 border-l-2 border-[#808080]">C: 1904.83</span>
    <span class="w-[132px] h-9 leading-10 pl-2 border-l-2 border-[#808080]">V: 430</span>
    <span class="w-[247px] h-9 leading-10 pl-2 border-l-2 border-[#808080] flex items-center gap-1.5">
      <svg class="w-[48px] h-7 -mt-2" viewBox="0 0 48 28"><path d="M0 0h48v6L0 19z" fill="#5a7a12"/><path d="M0 21L48 7v21H0z" fill="#0c4058"/><path d="M5 0v28M11 0v28M17 0v28M23 0v28M29 0v28M35 0v28M41 0v28" stroke="#e4e4e4" stroke-width="2"/></svg>
      259373/148 kb
    </span>
    <svg class="w-[30px] h-9 self-end" viewBox="0 0 30 36"><path d="M2 36L30 6M9 36l21-22M16 36l14-14M23 36l7-7" stroke="#808080" stroke-width="3"/></svg>
  </footer>

  <script>
    // [high, low, top, bottom, type] per bar; w = up, b = down, n = navy doji
    const bars = [
      [334,344,334,337,'b'],[318,344,334,342,'b'],[338,388,338,388,'b'],[378,408,386,408,'b'],[394,456,406,444,'b'],
      [393,444,396,440,'w'],[397,450,397,426,'b'],[408,430,410,426,'w'],[386,418,402,411,'w'],[376,404,386,404,'w'],
      [382,414,384,402,'b'],[388,430,392,402,'w'],[374,410,391,393,'n'],[380,400,389,391,'b'],[308,398,324,390,'w'],
      [310,342,326,332,'b'],[310,346,324,332,'w'],[304,330,316,324,'w'],[304,330,314,317,'b'],[304,340,314,331,'b'],
      [318,380,328,348,'b'],[298,358,302,354,'w'],[266,333,300,328,'b'],[298,326,303,305,'b'],[292,322,318,320,'b'],
      [303,332,318,320,'b'],[298,330,300,320,'w'],[250,300,282,300,'w'],[270,322,282,288,'b'],[282,322,290,300,'b'],
      [268,300,282,299,'w'],[270,288,276,286,'w'],[268,300,277,288,'b'],[276,306,282,290,'w'],[282,306,282,300,'b'],
      [282,300,292,298,'w'],[258,290,278,290,'w'],[268,294,278,290,'b'],[270,298,289,291,'b'],[283,312,292,298,'b'],
      [302,316,302,316,'b'],[308,330,312,320,'b'],[308,330,312,320,'w'],[308,324,314,316,'n'],[296,332,312,318,'b'],
      [312,332,312,320,'b'],[314,332,318,330,'b'],[320,346,326,344,'b'],[338,360,342,360,'b'],[348,368,348,360,'w'],
      [344,362,346,350,'b'],[328,350,338,346,'w'],[330,348,336,348,'b'],[338,368,344,350,'b'],[334,366,341,350,'w'],
      [336,356,340,354,'b'],[340,366,350,360,'w'],[348,386,350,378,'b'],[374,408,376,400,'b'],[396,420,398,404,'b'],
      [392,412,402,408,'b'],[384,410,386,408,'w'],[386,408,386,395,'b'],[376,404,382,394,'w'],[382,436,382,428,'b'],
      [424,456,428,454,'b'],[428,480,428,454,'w'],[410,444,432,440,'b'],[418,482,440,482,'b'],[444,482,450,482,'w'],
      [416,460,422,450,'w'],[408,440,409,424,'w'],[410,442,410,426,'b'],[420,446,420,446,'b'],[416,452,436,446,'w'],
      [434,454,434,452,'b'],[444,484,450,474,'b'],[454,475,462,475,'w'],[460,504,460,484,'b'],[448,490,482,490,'b'],
      [464,498,474,490,'w'],[474,500,474,492,'b'],[446,494,452,492,'w'],[424,455,430,455,'w'],[372,434,374,432,'w'],
      [368,446,372,434,'b'],[406,432,406,432,'w'],[370,414,378,408,'w'],[378,452,380,444,'b'],[436,464,442,446,'b'],
      [440,506,442,492,'b'],[456,510,490,504,'b'],[473,534,502,528,'b'],[522,550,526,542,'b'],[490,552,498,542,'w'],
      [500,578,500,564,'b'],[560,586,560,564,'b'],[554,580,560,580,'b'],[572,734,580,710,'b'],[680,844,708,824,'b'],
      [746,852,820,828,'b'],[814,859,826,828,'n'],[814,886,826,838,'b'],[830,916,838,910,'b'],[880,968,912,952,'b'],
      [850,956,858,952,'w'],[802,866,844,860,'w'],[840,898,844,896,'b'],[860,934,874,898,'w'],[878,896,878,896,'b']
    ];
    document.getElementById('candles').innerHTML = bars.map(([h, l, t, b, type], i) => {
      const x = 11 + 16 * i;
      const ink = type === 'n' ? '#0a0a80' : '#000';
      const wick = `<path d="M${x} ${h}V${l}" stroke="${ink}" stroke-width="2"/>`;
      if (type === 'w') return wick + `<rect x="${x - 4}" y="${t + 1}" width="8" height="${b - t - 2}" fill="#fff" stroke="#000" stroke-width="2"/>`;
      return wick + `<rect x="${x - 5}" y="${t}" width="10" height="${b - t}" fill="${ink}"/>`;
    }).join('');

    // histogram: top of each bar, baseline 1320
    const tops = {};
    const put = (from, to, y) => { for (let i = from; i <= to; i++) tops[i] = y; };
    put(2, 9, 1318); put(12, 12, 1318); put(14, 14, 1318); put(16, 16, 1318); put(48, 49, 1318); put(53, 53, 1318);
    put(57, 63, 1318); put(64, 64, 1316); put(65, 66, 1308); put(67, 67, 1316); put(68, 69, 1308); put(70, 75, 1316);
    put(76, 76, 1312); put(77, 77, 1316); put(78, 78, 1304); put(79, 81, 1312); put(82, 83, 1316); put(84, 89, 1318);
    put(90, 96, 1308); put(97, 97, 1312); put(98, 99, 1304); put(100, 104, 1302); put(105, 105, 1312); put(106, 109, 1316);
    document.getElementById('bars').innerHTML = Object.entries(tops).map(([i, y]) =>
      `<rect x="${6 + 16 * i}" y="${y}" width="10" height="${1320 - y}"/>`).join('');

    // price scale
    const prices = ['1909.18', '1907.33', '1905.53', '1903.73', '1901.88', '1900.08', '1898.23', '1896.43', '1894.58',
      '1892.78', '1890.93', '1889.13', '', '1885.48', '1883.63', '1881.83'];
    const tag = (y, bg, fg, s) => `<rect x="4" y="${y - 11}" width="78" height="22" fill="${bg}"/><text x="11" y="${y + 6}" fill="${fg}">${s}</text>`;
    document.getElementById('scale').innerHTML = prices.map((p, i) => {
      const y = 19 + 66 * i;
      return `<path d="M0 ${y}h4" stroke="#000" stroke-width="2"/><text x="11" y="${y + 6}">${p}</text>`;
    }).join('') + '<rect x="0" y="88" width="2" height="237"/>'
      + tag(787, '#000', '#fff', '1887.95') + tag(811, '#fb28fb', '#b0e0e4', '1887.26') + tag(929, '#fb28fb', '#b0e0e4', '1883.99');

    // time scale
    const times = ['2023', '03:30', '04:10', '04:50', '05:30', '06:10', '06:50', '07:30', '08:10', '08:50', '09:30', '10:10', '10:50', '11:30'];
    document.getElementById('dates').innerHTML = times.map((t, i) =>
      `<path d="M${2 + 128 * i} 0v6" stroke="#000" stroke-width="2"/><text x="${128 * i}" y="23">15 Mar ${t}</text>`).join('');
  </script>
</body>
</html>
